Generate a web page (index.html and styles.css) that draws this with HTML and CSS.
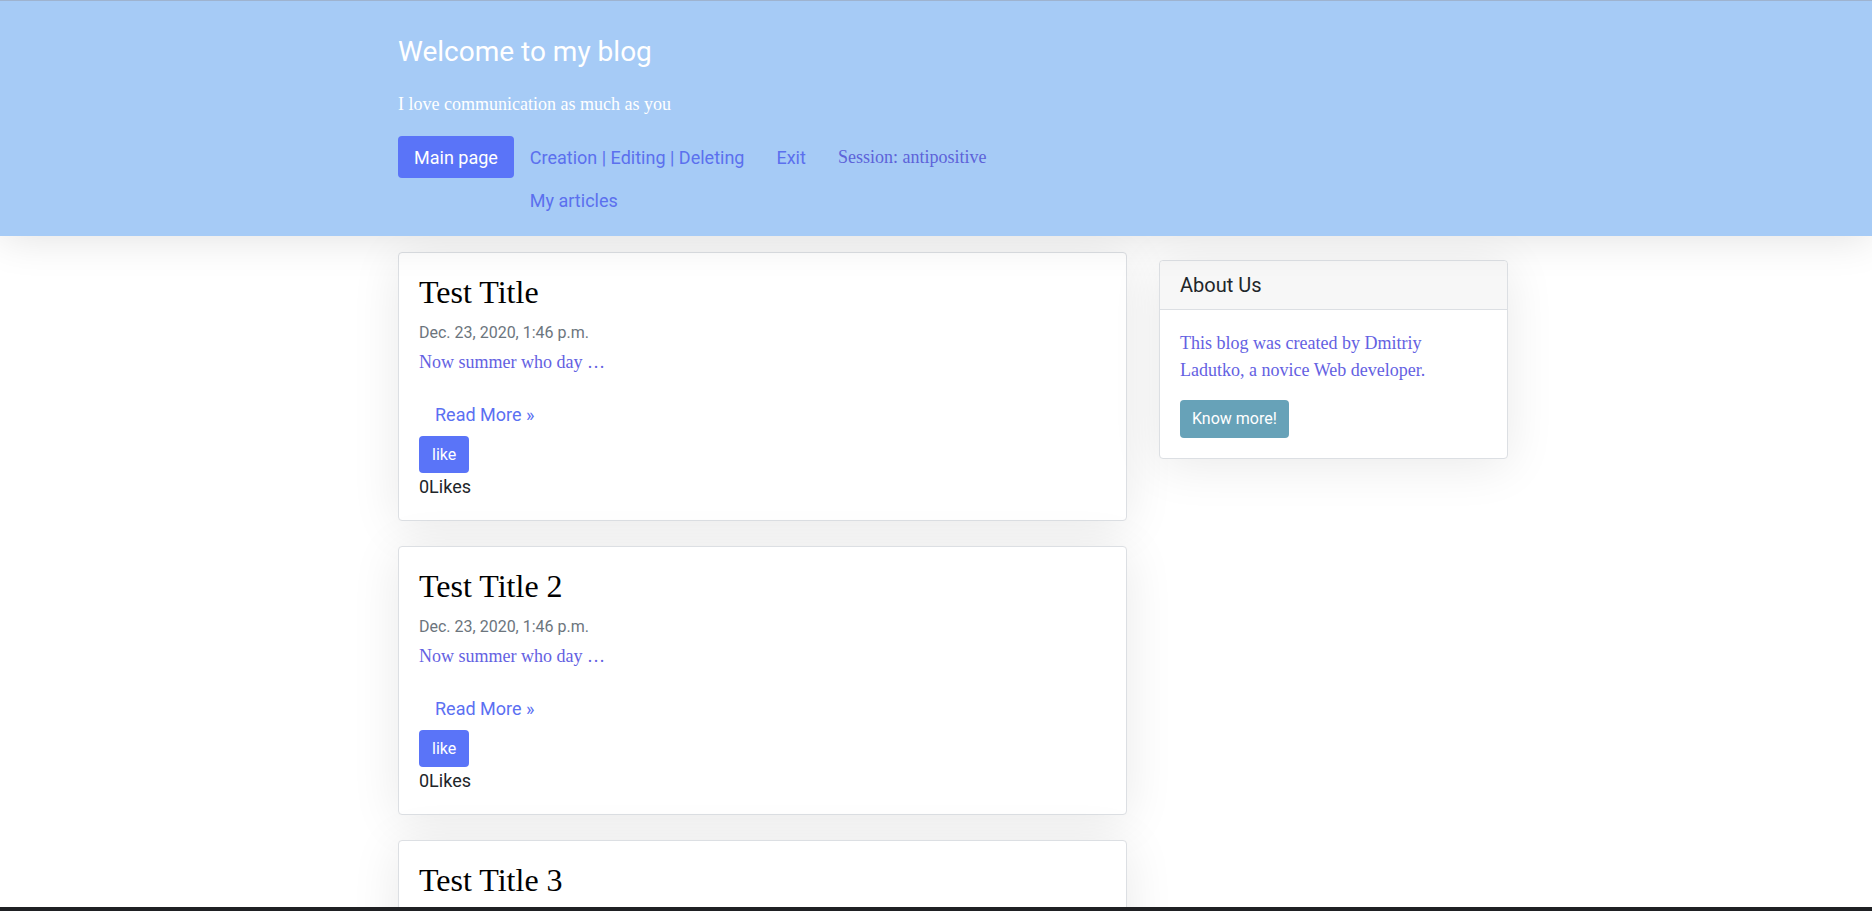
FILE: index.html
```html
<!DOCTYPE html>
<html lang="en">
<head>
<meta charset="utf-8">
<title>Welcome to my blog</title>
<link rel="stylesheet" href="styles.css">
</head>
<body>
<header class="site-header">
  <div class="container">
    <h1 class="site-title">Welcome to my blog</h1>
    <p class="tagline">I love communication as much as you</p>
    <nav class="nav">
      <a class="nav-btn" href="#">Main page</a>
      <ul class="nav-list">
        <li><a class="nav-link" href="#">Creation | Editing | Deleting</a></li>
        <li><a class="nav-link" href="#">Exit</a></li>
        <li><span class="nav-session">Session: antipositive</span></li>
        <li><a class="nav-link" href="#">My articles</a></li>
      </ul>
    </nav>
  </div>
</header>

<main class="container layout">
  <section class="posts">
    <article class="card post">
      <h2 class="post-title">Test Title</h2>
      <p class="post-date">Dec. 23, 2020, 1:46 p.m.</p>
      <p class="post-summary">Now summer who day …</p>
      <a class="read-more" href="#">Read More »</a>
      <button class="like-btn" type="button">like</button>
      <div class="likes">0Likes</div>
    </article>
    <article class="card post">
      <h2 class="post-title">Test Title 2</h2>
      <p class="post-date">Dec. 23, 2020, 1:46 p.m.</p>
      <p class="post-summary">Now summer who day …</p>
      <a class="read-more" href="#">Read More »</a>
      <button class="like-btn" type="button">like</button>
      <div class="likes">0Likes</div>
    </article>
    <article class="card post">
      <h2 class="post-title">Test Title 3</h2>
      <p class="post-date">Dec. 23, 2020, 1:46 p.m.</p>
      <p class="post-summary">Now summer who day …</p>
      <a class="read-more" href="#">Read More »</a>
      <button class="like-btn" type="button">like</button>
      <div class="likes">0Likes</div>
    </article>
  </section>

  <aside class="sidebar">
    <div class="card side-card">
      <div class="side-header">About Us</div>
      <div class="side-body">
        <p class="side-text">This blog was created by Dmitriy Ladutko, a novice Web developer.</p>
        <a class="know-btn" href="#">Know more!</a>
      </div>
    </div>
  </aside>
</main>

<div class="taskbar"></div>
</body>
</html>
```

FILE: styles.css
```css
* { box-sizing: border-box; }

html, body {
  margin: 0;
  padding: 0;
  background: #ffffff;
}

body {
  font-family: Roboto, "Liberation Sans", sans-serif;
  color: #212529;
  font-size: 18px;
  line-height: 1.5;
  overflow-x: hidden;
}

.container {
  max-width: 1142px;
  margin: 0 auto;
  padding-left: 33px;
}

/* Header */
.site-header {
  background: #a6cbf6;
  border-top: 1px solid #9eb3cf;
  padding: 34px 0 14px;
  box-shadow: 0 2px 40px rgba(0, 0, 0, 0.12);
  position: relative;
  z-index: 1;
}

.site-title {
  margin: 0 0 22px;
  font-size: 28px;
  line-height: 1.2;
  font-weight: 400;
  color: #ffffff;
}

.tagline {
  margin: 0 0 18px;
  font-family: "Liberation Serif", "Times New Roman", serif;
  font-size: 18px;
  line-height: 27px;
  color: #ffffff;
}

.nav {
  display: flex;
  align-items: flex-start;
}

.nav-btn {
  display: block;
  background: #5a74f8;
  color: #ffffff;
  text-decoration: none;
  font-size: 18px;
  line-height: 27px;
  padding: 8px 16px 7px;
  border-radius: 4px;
}

.nav-list {
  list-style: none;
  margin: 0;
  padding: 0;
  display: flex;
  flex-wrap: wrap;
  width: 540px;
}

.nav-link,
.nav-session {
  display: block;
  padding: 8px 16px;
  font-size: 18px;
  line-height: 27px;
  text-decoration: none;
}

.nav-link {
  color: #5b70ee;
}

.nav-session {
  font-family: "Liberation Serif", "Times New Roman", serif;
  color: #5d63d9;
}

/* Layout */
.layout {
  display: flex;
  align-items: flex-start;
  gap: 32px;
}

.posts {
  width: 729px;
  flex: none;
  padding-top: 16px;
  display: flex;
  flex-direction: column;
  gap: 25px;
}

.sidebar {
  width: 349px;
  flex: none;
  padding-top: 24px;
}

.card {
  background: #ffffff;
  border: 1px solid #dcdfe3;
  border-radius: 4px;
  box-shadow: 0 6px 50px rgba(0, 0, 0, 0.09);
}

/* Post */
.post {
  padding: 20px;
  display: flex;
  flex-direction: column;
  align-items: flex-start;
}

.post-title {
  margin: 0 0 10px;
  font-family: "Liberation Serif", "Times New Roman", serif;
  font-weight: 400;
  font-size: 32px;
  line-height: 1.2;
  color: #000000;
}

.post-date {
  margin: 0 0 4px;
  font-size: 16px;
  line-height: 24px;
  color: #6c757d;
}

.post-summary {
  margin: 0 0 16px;
  font-family: "Liberation Serif", "Times New Roman", serif;
  font-size: 18px;
  line-height: 27px;
  color: #6461e2;
}

.read-more {
  display: inline-block;
  padding: 9px 16px 8px;
  font-size: 18px;
  line-height: 27px;
  color: #5b70f2;
  text-decoration: none;
}

.like-btn {
  display: inline-block;
  border: 0;
  background: #5a74f8;
  color: #ffffff;
  font-family: Roboto, "Liberation Sans", sans-serif;
  font-size: 16px;
  line-height: 25px;
  padding: 6px 13px;
  border-radius: 4px;
}

.likes {
  font-size: 18px;
  line-height: 27px;
  color: #212529;
}

/* Sidebar */
.side-header {
  background: #f7f7f7;
  border-bottom: 1px solid #dcdfe3;
  padding: 12px 20px;
  font-size: 20px;
  line-height: 24px;
  color: #212529;
  border-radius: 4px 4px 0 0;
}

.side-body {
  padding: 20px;
}

.side-text {
  margin: 0 0 16px;
  font-family: "Liberation Serif", "Times New Roman", serif;
  font-size: 18px;
  line-height: 27px;
  color: #6461e2;
}

.know-btn {
  display: inline-block;
  background: #67a2b8;
  color: #ffffff;
  text-decoration: none;
  font-size: 16px;
  line-height: 24px;
  padding: 7px 12px;
  border-radius: 4px;
}

.taskbar {
  position: fixed;
  left: 0;
  right: 0;
  bottom: 0;
  height: 4px;
  background: #1f2023;
  z-index: 5;
}
```
